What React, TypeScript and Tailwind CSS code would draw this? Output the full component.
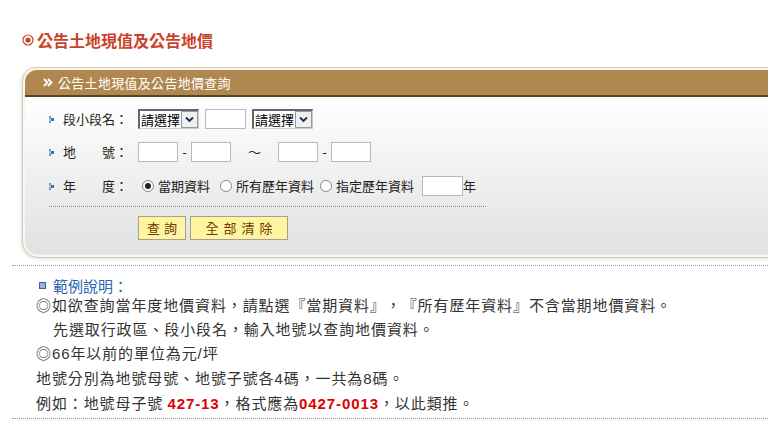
import React from "react";

const FONT = { fontFamily: '"Liberation Sans","Noto Sans CJK TC",sans-serif' };
const CJK = { fontFamily: '"Noto Sans CJK TC","Liberation Sans",sans-serif' };
const LAT = { fontFamily: '"Liberation Sans",sans-serif' };

function Bullet() {
  return (
    <svg width="7" height="9" viewBox="0 0 7 9" className="mr-[7px] shrink-0">
      <rect x="0" y="1" width="2" height="2" fill="#6f96c4" />
      <rect x="2" y="3" width="3" height="3" fill="#3f6fa8" />
      <rect x="0" y="6" width="2" height="2" fill="#6f96c4" />
      <rect x="0" y="3" width="2" height="3" fill="#a9c1de" />
    </svg>
  );
}

function SelectBox() {
  return (
    <div className="flex h-[20px] w-[61px] items-stretch border-t-2 border-l-2 border-b border-r border-t-[#666] border-l-[#666] border-b-[#ccc] border-r-[#ccc] bg-white">
      <div className="flex flex-1 items-center pl-[1px] text-[13px] leading-none text-black" style={CJK}>請選擇</div>
      <div className="flex w-[17px] items-center justify-center border border-[#999] bg-[#f0f0f0]">
        <svg width="9" height="7" viewBox="0 0 9 7">
          <path d="M1 1.5 L4.5 5 L8 1.5" stroke="#1a2a55" strokeWidth="1.8" fill="none" />
        </svg>
      </div>
    </div>
  );
}

function TextBox({ w = 40 }: { w?: number }) {
  return <div className="h-[20px] border border-[#b8b8b8] bg-white" style={{ width: w }} />;
}

function Radio({ checked }: { checked?: boolean }) {
  return (
    <span className="mr-[4px] inline-flex h-[12px] w-[12px] items-center justify-center rounded-full border border-[#8a8a8a] bg-white">
      {checked && <span className="h-[6px] w-[6px] rounded-full bg-[#222]" />}
    </span>
  );
}

export default function App() {
  return (
    <div className="relative h-[433px] w-[768px] overflow-hidden bg-white text-[#333] [text-spacing-trim:space-all]" style={FONT}>
      {/* Title */}
      <div className="mt-[30px] flex h-[20px] items-center pl-[22px]">
        <svg width="12" height="12" viewBox="0 0 12 12" className="mr-[3px]">
          <circle cx="6" cy="6" r="5" fill="none" stroke="#c9432a" strokeWidth="1.2" />
          <circle cx="6" cy="6" r="2.6" fill="#c9432a" />
        </svg>
        <span className="text-[16px] font-bold leading-none text-[#c9432a]" style={CJK}>公告土地現值及公告地價</span>
      </div>

      {/* Panel */}
      <div className="ml-[22px] mt-[17px] w-[780px] rounded-tl-[14px] rounded-bl-[16px] border border-[#d8cfb9] bg-[#f8f6ee] p-[2px] shadow-[-1px_1px_3px_rgba(0,0,0,0.12)]">
        <div className="flex h-[27px] items-center rounded-tl-[12px] border-b-2 border-[#5b4424] bg-[#b0884f] pl-[18px] text-[13px] text-white">
          <svg width="10" height="9" viewBox="0 0 10 9" className="mr-[5px]">
            <path d="M1 1 L4.5 4.5 L1 8 M5 1 L8.5 4.5 L5 8" stroke="#fff" strokeWidth="1.8" fill="none" />
          </svg>
          <span className="leading-none tracking-[0.3px]" style={CJK}>公告土地現值及公告地價查詢</span>
        </div>
        <div className="rounded-bl-[13px] border-b border-[#efebd8] bg-gradient-to-b from-white to-[#e1e1e1] pb-[14px] pl-[24px] pt-[10px] text-[13px] text-[#222]" style={CJK}>
          {/* row 1 */}
          <div className="flex h-[24px] items-center">
            <Bullet />
            <span className="w-[75px]">段小段名：</span>
            <SelectBox />
            <div className="ml-[6px]"><TextBox w={41} /></div>
            <div className="ml-[6px]"><SelectBox /></div>
          </div>
          {/* row 2 */}
          <div className="mt-[9px] flex h-[24px] items-center">
            <Bullet />
            <span className="w-[75px]">地<span className="inline-block w-[26px]" />號：</span>
            <TextBox />
            <span className="w-[13px] text-center">-</span>
            <TextBox />
            <span className="w-[47px] text-center">～</span>
            <TextBox />
            <span className="w-[13px] text-center">-</span>
            <TextBox />
          </div>
          {/* row 3 */}
          <div className="mt-[10px] flex h-[24px] items-center">
            <Bullet />
            <span className="w-[79px]">年<span className="inline-block w-[26px]" />度：</span>
            <Radio checked />
            <span>當期資料</span>
            <span className="ml-[10px]" />
            <Radio />
            <span>所有歷年資料</span>
            <span className="ml-[6px]" />
            <Radio />
            <span>指定歷年資料</span>
            <div className="ml-[8px]"><TextBox w={41} /></div>
            <span>年</span>
          </div>
          <div className="mt-[8px] w-[437px] border-t border-dotted border-[#888]" />
          <div className="ml-[89px] mt-[9px] flex gap-[4px]">
            <div className="flex h-[24px] w-[48px] items-center justify-center border border-[#a6a18a] bg-[#fff4a0] text-[13px] tracking-[4px] text-[#6a3c00]">
              <span className="pl-[4px]">查詢</span>
            </div>
            <div className="flex h-[24px] w-[98px] items-center justify-center border border-[#a6a18a] bg-[#fff4a0] text-[13px] tracking-[5px] text-[#6a3c00]">
              <span className="pl-[5px]">全部清除</span>
            </div>
          </div>
        </div>
      </div>

      <div className="ml-[12px] mt-[7px] border-t border-dotted border-[#999]" />

      {/* Notes */}
      <div className="pl-[36px] pt-[11px]" style={CJK}>
        <div className="flex h-[16px] items-center pl-[3px] text-[15px] text-[#2d67b2]">
          <span className="mr-[7px] inline-block h-[7px] w-[7px] border border-[#3e5f8f] bg-[#9db3d4]" />
          <span className="leading-none">範例說明：</span>
        </div>
        <div className="text-[15px] leading-[24px] tracking-[0.9px] text-[#333]">
          <div>◎如欲查詢當年度地價資料，請點選『當期資料』，『所有歷年資料』不含當期地價資料。</div>
          <div className="pl-[17px]">先選取行政區、段小段名，輸入地號以查詢地價資料。</div>
          <div>◎<span style={LAT}>66</span>年以前的單位為元<span style={LAT}>/</span>坪</div>
          <div>地號分別為地號母號、地號子號各<span style={LAT}>4</span>碼，一共為<span style={LAT}>8</span>碼。</div>
          <div>
            例如：地號母子號 <b className="text-[#e00000]" style={LAT}>427-13</b>，格式應為<b className="text-[#e00000]" style={LAT}>0427-0013</b>，以此類推。
          </div>
        </div>
      </div>
      <div className="ml-[12px] mt-[2px] border-t border-dotted border-[#999]" />
    </div>
  );
}
